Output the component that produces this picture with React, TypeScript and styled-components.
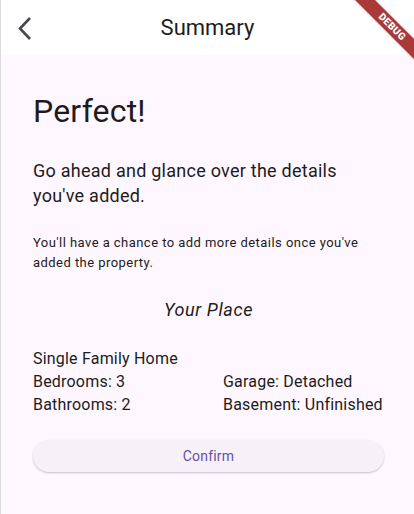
import React from "react";
import styled, { createGlobalStyle } from "styled-components";

const Global = createGlobalStyle`
  html, body { margin: 0; padding: 0; background: #fef7ff; }
  body { font-family: Roboto, "Noto Sans", sans-serif; color: #1d1b20; }
  * { box-sizing: border-box; }
`;

const Frame = styled.div`
  position: relative;
  width: 414px;
  height: 514px;
  overflow: hidden;
  background: #fef7ff;
  border-left: 1px solid #d9d9d9;
  display: flex;
  flex-direction: column;
`;

const AppBar = styled.header`
  height: 55px;
  background: #ffffff;
  display: grid;
  grid-template-columns: 56px 1fr 56px;
  align-items: center;
`;

const BackButton = styled.button`
  width: 48px;
  height: 48px;
  border: none;
  background: transparent;
  padding: 0;
  display: flex;
  align-items: center;
  justify-content: center;
  color: #49454f;
`;

const Title = styled.h1`
  margin: 0;
  text-align: center;
  font-size: 22px;
  font-weight: 400;
  line-height: 28px;
  color: #1d1b20;
`;

const Body = styled.main`
  padding: 36px 30px 0 32px;
  display: flex;
  flex-direction: column;
`;

const Headline = styled.h2`
  margin: 0;
  font-size: 32px;
  font-weight: 400;
  line-height: 40px;
  letter-spacing: 0.2px;
  color: #1d1b20;
`;

const Lead = styled.p`
  margin: 27px 0 0;
  font-size: 18px;
  line-height: 25px;
  letter-spacing: 0.25px;
  color: #1d1b20;
`;

const Note = styled.p`
  margin: 25px 0 0;
  font-size: 13px;
  line-height: 20px;
  letter-spacing: 0.45px;
  color: #1d1b20;
`;

const SectionTitle = styled.h3`
  margin: 25px 0 0;
  text-align: center;
  font-size: 18px;
  font-style: italic;
  font-weight: 400;
  line-height: 24px;
  letter-spacing: 0.6px;
  color: #1d1b20;
`;

const Details = styled.div`
  margin-top: 25px;
  display: grid;
  grid-template-columns: 190px 1fr;
  font-size: 16px;
  line-height: 23px;
  letter-spacing: 0.2px;
  color: #1d1b20;
  white-space: nowrap;
`;

const Cell = styled.div<{ $full?: boolean }>`
  grid-column: ${(p) => (p.$full ? "1 / -1" : "auto")};
`;

const ConfirmButton = styled.button`
  margin-top: 24px;
  height: 32px;
  width: 100%;
  border: none;
  border-radius: 16px;
  background: #f6f1f9;
  box-shadow: 0 1px 2px rgba(0, 0, 0, 0.22);
  color: #6750a4;
  font-family: Roboto, sans-serif;
  font-size: 14px;
  font-weight: 400;
  letter-spacing: 0.2px;
`;

const Banner = styled.div`
  position: absolute;
  left: 337px;
  top: 20px;
  width: 108px;
  height: 14px;
  transform: rotate(45deg);
  background: rgb(170, 58, 58);
  box-shadow: 0 0 3px rgba(0, 0, 0, 0.25);
  color: #fff;
  font-family: Roboto, sans-serif;
  font-size: 10px;
  font-weight: 900;
  line-height: 14px;
  text-align: center;
  letter-spacing: 0.3px;
`;

export default function App() {
  return (
    <>
      <Global />
      <Frame>
        <AppBar>
          <BackButton aria-label="Back">
            <svg width="24" height="24" viewBox="0 0 24 24" fill="none">
              <polyline
                points="17,2 7,12.5 17,23"
                stroke="#49454f"
                strokeWidth="2.6"
                strokeLinecap="butt"
                strokeLinejoin="miter"
              />
            </svg>
          </BackButton>
          <Title>Summary</Title>
          <div />
        </AppBar>
        <Body>
          <Headline>Perfect!</Headline>
          <Lead>Go ahead and glance over the details you've added.</Lead>
          <Note>You'll have a chance to add more details once you've added the property.</Note>
          <SectionTitle>Your Place</SectionTitle>
          <Details>
            <Cell $full>Single Family Home</Cell>
            <Cell>Bedrooms: 3</Cell>
            <Cell>Garage: Detached</Cell>
            <Cell>Bathrooms: 2</Cell>
            <Cell>Basement: Unfinished</Cell>
          </Details>
          <ConfirmButton>Confirm</ConfirmButton>
        </Body>
        <Banner>DEBUG</Banner>
      </Frame>
    </>
  );
}
